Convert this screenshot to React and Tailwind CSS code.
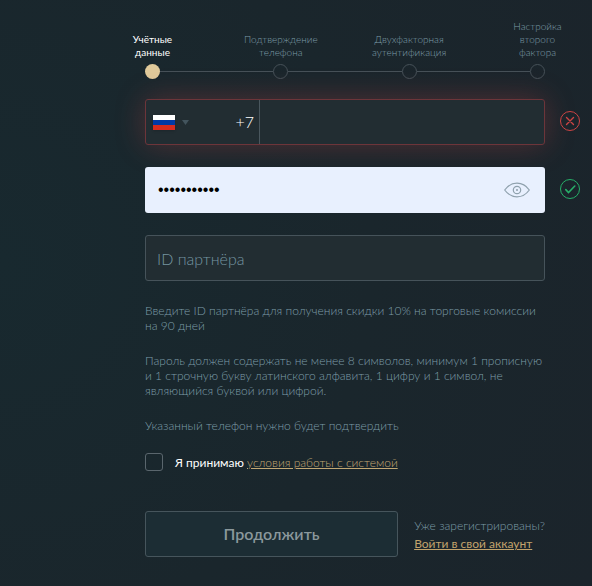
import React, { useState } from "react";

const steps = [
  { id: 1, lines: ["Учётные", "данные"] },
  { id: 2, lines: ["Подтверждение", "телефона"] },
  { id: 3, lines: ["Двухфакторная", "аутентификация"] },
  { id: 4, lines: ["Настройка", "второго", "фактора"] },
];

const Stepper = ({ current }) => (
  <div className="flex items-end">
    {steps.map((step) => {
      const active = step.id === current;
      return (
        <React.Fragment key={step.id}>
          {step.id > 1 && <div className="mb-[7px] h-px flex-1 bg-[#465158]" />}
          <div className="flex w-[15px] flex-col items-center gap-[5px]">
            <div
              className={
                active
                  ? "text-center text-[10px] leading-[13px] whitespace-nowrap text-white"
                  : "text-center text-[10px] leading-[13px] font-light whitespace-nowrap text-[#7d9da8]"
              }
            >
              {step.lines.map((line) => (
                <div key={line}>{line}</div>
              ))}
            </div>
            <div
              className={
                active
                  ? "size-[15px] rounded-full bg-[#e0ca9b]"
                  : "size-[15px] rounded-full border border-[#465158]"
              }
            />
          </div>
        </React.Fragment>
      );
    })}
  </div>
);

const ErrorIcon = () => (
  <svg className="size-5 shrink-0" viewBox="0 0 20 20" fill="none" stroke="#cc4444">
    <circle cx="10" cy="10" r="9.5" />
    <path d="M6.5 6.5l7 7M13.5 6.5l-7 7" strokeWidth="1.4" strokeLinecap="round" />
  </svg>
);

const SuccessIcon = () => (
  <svg className="size-5 shrink-0" viewBox="0 0 20 20" fill="none" stroke="#27ae68">
    <circle cx="10" cy="10" r="9.5" />
    <path d="M5.8 10.6l2.700 2.900 6.300-6.500" strokeWidth="1.600" strokeLinecap="round" />
  </svg>
);

const EyeIcon = () => (
  <svg className="h-4 w-[26px]" viewBox="0 0 26 16" fill="none" stroke="#8fa1ad">
    <path d="M.7 8C4 3.400 8.200 1.200 13 1.200S22 3.400 25.300 8C22 12.600 17.800 14.800 13 14.800S4 12.600.7 8z" strokeWidth="1.200" />
    <circle cx="13" cy="8" r="3.700" strokeWidth="1.200" />
    <circle cx="13" cy="8" r="1" fill="#8fa1ad" stroke="none" />
  </svg>
);

const RussiaFlag = () => (
  <svg className="h-[15px] w-[22px] shadow-sm" viewBox="0 0 22 15">
    <rect width="22" height="5" fill="#ffffff" />
    <rect y="5" width="22" height="5" fill="#0039a6" />
    <rect y="10" width="22" height="5" fill="#d52b1e" />
  </svg>
);

// Field with a validation mark that hangs to the right of the form column
const FieldRow = ({ icon, children }) => (
  <div className="-mr-[35px] flex items-center gap-[15px]">
    {children}
    <div className="pb-0.5">{icon}</div>
  </div>
);

const App = () => {
  const [phone, setPhone] = useState("");
  const [password, setPassword] = useState("Password123");
  const [partnerId, setPartnerId] = useState("");
  const [showPassword, setShowPassword] = useState(false);
  const [accepted, setAccepted] = useState(false);

  return (
    <div className="min-h-screen bg-[radial-gradient(circle_at_0%_45%,#18292f_0%,#1a262c_55%,#1b242b_100%)] pt-5 pr-[47px] pb-[29px] pl-[145px] font-['Lato','Open_Sans',sans-serif]">
      <form onSubmit={(e) => e.preventDefault()}>
        <Stepper current={1} />

        <div className="mt-5 flex flex-col gap-[22px]">
          <FieldRow icon={<ErrorIcon />}>
            <div className="flex h-[46px] min-w-0 flex-1 rounded-[3px] border border-[#6d353a] bg-[#222d32] shadow-[0_0_30px_rgba(204,68,68,0.32)]">
              <button
                type="button"
                aria-label="Код страны"
                className="flex w-[114px] shrink-0 items-center border-r border-[#4a575e] pr-[5px] pl-[7px]"
              >
                <RussiaFlag />
                <svg className="ml-[7px] h-[5px] w-[7px]" viewBox="0 0 7 5">
                  <path d="M0 0h7L3.500 5z" fill="#43545d" />
                </svg>
                <span className="ml-auto text-base font-light text-white">+7</span>
              </button>
              <input
                type="tel"
                aria-label="Телефон"
                value={phone}
                onChange={(e) => setPhone(e.target.value)}
                className="min-w-0 flex-1 px-3 text-base font-light text-white outline-none"
              />
            </div>
          </FieldRow>

          <FieldRow icon={<SuccessIcon />}>
            <div className="flex h-[46px] min-w-0 flex-1 items-center rounded-[3px] bg-[#e8f0fe] pr-[15px]">
              <input
                type={showPassword ? "text" : "password"}
                aria-label="Пароль"
                value={password}
                onChange={(e) => setPassword(e.target.value)}
                className="h-full min-w-0 flex-1 px-[13px] font-['Liberation_Sans',sans-serif] text-base text-black outline-none"
              />
              <button
                type="button"
                aria-label="Показать пароль"
                onClick={() => setShowPassword(!showPassword)}
              >
                <EyeIcon />
              </button>
            </div>
          </FieldRow>

          <input
            type="text"
            aria-label="ID партнёра"
            placeholder="ID партнёра"
            value={partnerId}
            onChange={(e) => setPartnerId(e.target.value)}
            className="h-[46px] w-full rounded-[3px] border border-[#46535a] bg-[#222d32] px-[11px] text-base font-light text-white outline-none placeholder:text-[#7595a1]"
          />
        </div>

        <div className="mt-[22px] flex flex-col gap-5 text-xs leading-[15px] font-light text-[#7d9da8]">
          <p>Введите ID партнёра для получения скидки 10% на торговые комиссии на 90 дней</p>
          <p>
            Пароль должен содержать не менее 8 символов, минимум 1 прописную и 1 строчную букву
            латинского алфавита, 1 цифру и 1 символ, не являющийся буквой или цифрой.
          </p>
          <p>Указанный телефон нужно будет подтвердить</p>
        </div>

        <div className="mt-5 flex items-center gap-3 text-xs text-white">
          <input
            id="terms"
            type="checkbox"
            checked={accepted}
            onChange={(e) => setAccepted(e.target.checked)}
            className="size-[18px] appearance-none rounded-[3px] border border-[#5a666d] checked:bg-[#e0ca9b]"
          />
          <label htmlFor="terms" className="pt-0.5">
            Я принимаю{" "}
            <a href="#terms" className="font-light text-[#c2a874] underline">
              условия работы с системой
            </a>
          </label>
        </div>

        <div className="mt-10 flex items-center gap-4">
          <button
            type="submit"
            className="h-[46px] flex-1 rounded-[3px] border border-[#46555c] bg-[#1c2d34] text-base font-semibold text-[#8b989c]"
          >
            Продолжить
          </button>
          <div className="pt-0.5 text-xs leading-[18px]">
            <p className="font-light text-[#7d9da8]">Уже зарегистрированы?</p>
            <a href="#login" className="text-[#c2a36c] underline">
              Войти в свой аккаунт
            </a>
          </div>
        </div>
      </form>
    </div>
  );
};

export default App;
